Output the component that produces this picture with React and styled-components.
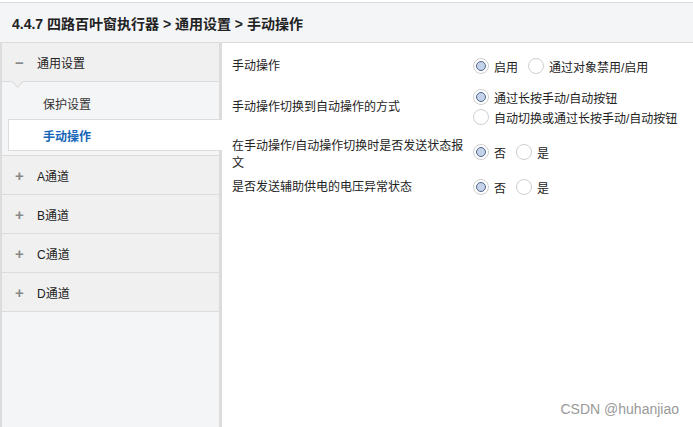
import styled, { createGlobalStyle } from "styled-components";

const GlobalStyle = createGlobalStyle`
  html, body {
    margin: 0;
    padding: 0;
    background: #fff;
  }
  body {
    font-family: "Liberation Sans", "Noto Sans CJK SC", sans-serif;
    font-size: 12px;
    color: #333;
  }
`;

const Page = styled.div`
  position: relative;
  width: 693px;
  height: 427px;
  padding-top: 2px;
  box-sizing: border-box;
  display: flex;
  flex-direction: column;
`;

const Header = styled.div`
  height: 39px;
  display: flex;
  align-items: center;
  padding-left: 12px;
  background: #f4f5f7;
  border-top: 1px solid #dcdcdc;
  border-bottom: 1px solid #dcdcdc;
  font-size: 14px;
  font-weight: 700;
  color: #222;
`;

const Body = styled.div`
  flex: 1;
  display: flex;
  min-height: 0;
`;

const Sidebar = styled.div`
  width: 217px;
  flex-shrink: 0;
  background: #f4f5f7;
  border-left: 2px solid #dcdcdc;
  border-right: 3px solid #dcdcdc;
`;

const GroupHead = styled.div`
  position: relative;
  height: 38px;
  display: flex;
  align-items: center;
  background: #f0f0f0;
  border-bottom: 1px solid #dcdcdc;
  border-top: ${(p) => (p.$topLine ? "1px solid #dcdcdc" : "none")};

  ${(p) =>
    p.$open &&
    `
    &::after {
      content: "";
      position: absolute;
      left: 11px;
      bottom: -5px;
      width: 8px;
      height: 8px;
      background: #f0f0f0;
      border-right: 1px solid #dcdcdc;
      border-bottom: 1px solid #dcdcdc;
      transform: rotate(45deg);
    }
  `}
`;

const Toggle = styled.span`
  width: 35px;
  text-align: center;
  font-size: 15px;
  line-height: 1;
  color: #888;
  font-weight: 700;
`;

const GroupLabel = styled.span`
  color: #222;
`;

const SubList = styled.div`
  padding: 5px 0 4px;
`;

const SubItem = styled.div`
  height: 30px;
  display: flex;
  align-items: center;
  padding-left: ${(p) => (p.$active ? "34px" : "40px")};
  margin-left: ${(p) => (p.$active ? "6px" : "0")};
  margin-right: ${(p) => (p.$active ? "-3px" : "0")};
  background: ${(p) => (p.$active ? "#fff" : "transparent")};
  border: ${(p) => (p.$active ? "1px solid #dcdcdc" : "1px solid transparent")};
  border-right: none;
  color: ${(p) => (p.$active ? "#1565b8" : "#333")};
  font-weight: ${(p) => (p.$active ? 600 : 400)};
  position: relative;
`;

const Content = styled.div`
  flex: 1;
  padding: 13px 0 0 10px;
  display: flex;
  flex-direction: column;
  gap: 8px;
`;

const Row = styled.div`
  display: flex;
  align-items: center;
  &:first-child {
    margin-bottom: 3px;
  }
`;

const Label = styled.div`
  width: 241px;
  line-height: 17px;
  padding-top: ${(p) => (p.$wrap ? "3px" : "0")};
  margin-bottom: ${(p) => (p.$wrap ? "-3px" : "0")};
  color: #222;
`;

const Options = styled.div`
  display: flex;
  flex-direction: ${(p) => (p.$stack ? "column" : "row")};
  gap: ${(p) => (p.$stack ? "0" : "10px")};
`;

const Option = styled.label`
  display: flex;
  align-items: center;
  height: 20px;
  color: #222;
`;

const Circle = styled.span`
  width: 16px;
  height: 16px;
  box-sizing: border-box;
  border-radius: 50%;
  border: 1px solid #cfcfcf;
  background: #fff;
  margin-right: 5px;
  display: flex;
  align-items: center;
  justify-content: center;

  &::after {
    content: "";
    display: ${(p) => (p.$checked ? "block" : "none")};
    width: 10px;
    height: 10px;
    box-sizing: border-box;
    border-radius: 50%;
    border: 1.5px solid #50658a;
    background: #c4d3ea;
  }
`;

const Watermark = styled.div`
  position: absolute;
  right: 14px;
  bottom: 10px;
  font-size: 14px;
  color: #999;
  font-family: "Liberation Sans", sans-serif;
`;

const Radio = ({ checked, children }) => (
  <Option>
    <Circle $checked={checked} />
    {children}
  </Option>
);

const channels = ["A通道", "B通道", "C通道", "D通道"];

export default function App() {
  return (
    <>
      <GlobalStyle />
      <Page>
        <Header>4.4.7 四路百叶窗执行器 &gt; 通用设置 &gt; 手动操作</Header>
        <Body>
          <Sidebar>
            <GroupHead $open>
              <Toggle>−</Toggle>
              <GroupLabel>通用设置</GroupLabel>
            </GroupHead>
            <SubList>
              <SubItem>保护设置</SubItem>
              <SubItem $active>手动操作</SubItem>
            </SubList>
            {channels.map((c, i) => (
              <GroupHead key={c} $topLine={i === 0}>
                <Toggle>+</Toggle>
                <GroupLabel>{c}</GroupLabel>
              </GroupHead>
            ))}
          </Sidebar>
          <Content>
            <Row>
              <Label>手动操作</Label>
              <Options>
                <Radio checked>启用</Radio>
                <Radio>通过对象禁用/启用</Radio>
              </Options>
            </Row>
            <Row>
              <Label>手动操作切换到自动操作的方式</Label>
              <Options $stack>
                <Radio checked>通过长按手动/自动按钮</Radio>
                <Radio>自动切换或通过长按手动/自动按钮</Radio>
              </Options>
            </Row>
            <Row>
              <Label $wrap>在手动操作/自动操作切换时是否发送状态报文</Label>
              <Options>
                <Radio checked>否</Radio>
                <Radio>是</Radio>
              </Options>
            </Row>
            <Row>
              <Label>是否发送辅助供电的电压异常状态</Label>
              <Options>
                <Radio checked>否</Radio>
                <Radio>是</Radio>
              </Options>
            </Row>
          </Content>
        </Body>
        <Watermark>CSDN @huhanjiao</Watermark>
      </Page>
    </>
  );
}
